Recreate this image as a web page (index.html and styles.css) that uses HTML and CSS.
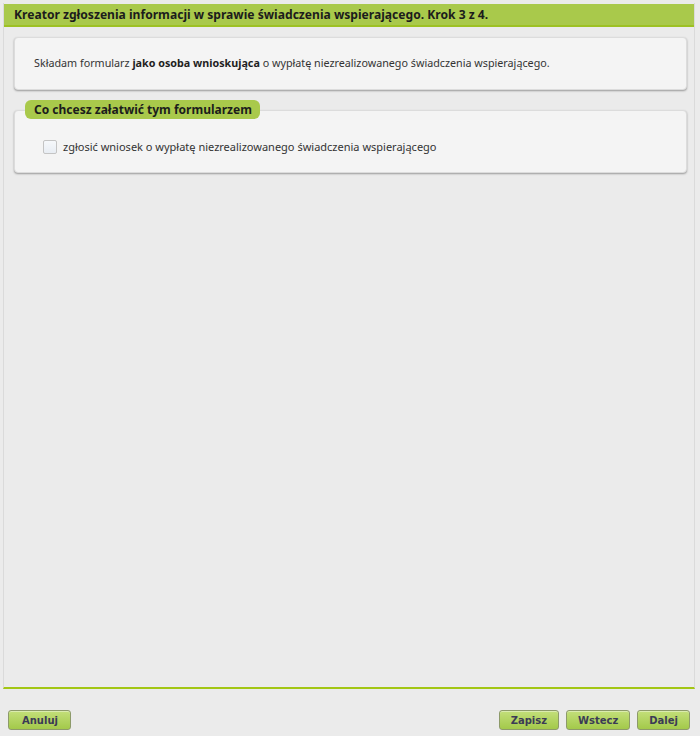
FILE: index.html
```html
<!DOCTYPE html>
<html lang="pl">
<head>
<meta charset="utf-8">
<link rel="stylesheet" href="styles.css">
</head>
<body>
<div class="wizard">
  <div class="wizard-header">Kreator zgłoszenia informacji w sprawie świadczenia wspierającego. Krok 3 z 4.</div>
  <div class="wizard-body">
    <div class="box info-box"><p class="info-text">Składam formularz <b>jako osoba wnioskująca</b> o wypłatę niezrealizowanego świadczenia wspierającego.</p></div>
    <div class="group">
      <div class="legend">Co chcesz załatwić tym formularzem</div>
      <div class="box group-box">
        <label class="check"><span class="checkbox"></span><span>zgłosić wniosek o wypłatę niezrealizowanego świadczenia wspierającego</span></label>
      </div>
    </div>
  </div>
</div>
<div class="footer">
  <button class="btn btn-cancel">Anuluj</button>
  <div class="footer-right">
    <button class="btn">Zapisz</button>
    <button class="btn">Wstecz</button>
    <button class="btn">Dalej</button>
  </div>
</div>
</body>
</html>
```
FILE: styles.css
```css
html, body {
  margin: 0;
  padding: 0;
}
body {
  background: #ebebeb;
  font-family: "Noto Sans", "DejaVu Sans", sans-serif;
  font-size: 11px;
  color: #333;
  width: 700px;
  height: 736px;
  overflow: hidden;
}
.wizard {
  margin: 3px 5px 0 3px;
  height: 684px;
  border: 1px solid #dadada;
  border-top: none;
  border-bottom: 2px solid #a3c614;
  display: flex;
  flex-direction: column;
}
.wizard-header {
  margin-top: 1px;
  height: 21px;
  line-height: 21px;
  background: #a9c94b;
  border-bottom: 2px solid #9dc123;
  padding-left: 10px;
  font-weight: bold;
  font-size: 12.1px;
  color: #1c1c1c;
}
.wizard-body {
  padding: 10px 7px 0 10px;
  display: flex;
  flex-direction: column;
}
.box {
  background: #f4f4f4;
  border: 1px solid #dcdcdc;
  border-radius: 4px;
  box-shadow: 0 1px 2px rgba(0, 0, 0, 0.35);
}
.info-box {
  box-sizing: border-box;
  height: 53px;
  padding: 0 19px;
}
.info-text {
  margin: 0;
  line-height: 51px;
  font-size: 10.75px;
}
.info-text b {
  color: #1f1f1f;
}
.group {
  margin-top: 10px;
  display: flex;
  flex-direction: column;
}
.legend {
  align-self: flex-start;
  margin-left: 11px;
  height: 19px;
  line-height: 19px;
  padding: 0 8px 0 9px;
  background: #a9c94b;
  border-radius: 6px;
  font-weight: bold;
  font-size: 12px;
  color: #1c1c1c;
  position: relative;
  z-index: 1;
}
.group-box {
  margin-top: -9px;
  height: 63px;
  box-sizing: border-box;
  padding: 28px 0 0 28px;
}
.check {
  display: flex;
  align-items: center;
  gap: 6px;
}
.checkbox {
  width: 12px;
  height: 12px;
  border: 1px solid #c4c4c4;
  background: linear-gradient(#f6f8fb, #e8edf3);
  border-radius: 2px;
}
.footer {
  display: flex;
  justify-content: space-between;
  padding: 21px 10px 0 8px;
}
.footer-right {
  display: flex;
  gap: 7px;
}
.btn {
  height: 20px;
  padding: 0 11px;
  border: 1px solid #8d9a6a;
  border-radius: 3px;
  background: linear-gradient(#c3df7a, #a3c94a);
  font-family: "DejaVu Sans", Verdana, sans-serif;
  font-weight: bold;
  font-size: 10px;
  color: #3b3b55;
  box-shadow: inset 0 1px 0 rgba(255, 255, 255, 0.4);
}
.btn-cancel {
  padding: 0 12px 0 13px;
}
```
